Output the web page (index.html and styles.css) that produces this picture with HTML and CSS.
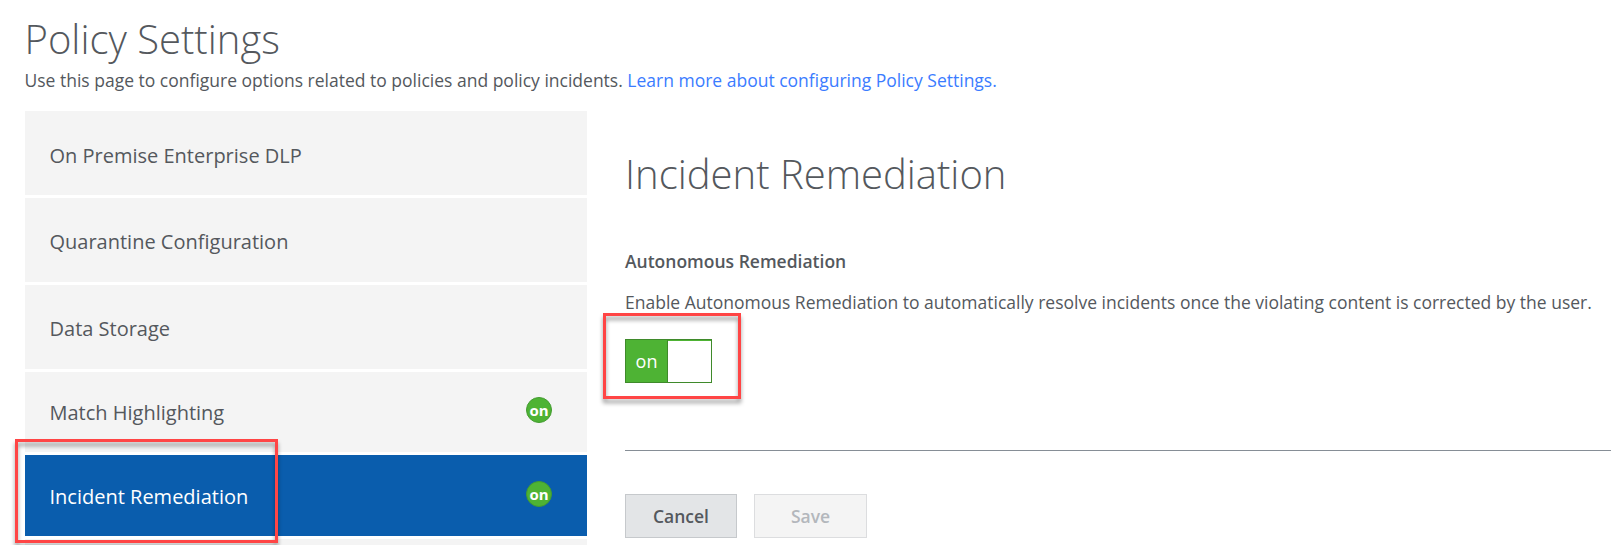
FILE: index.html
```html
<!DOCTYPE html>
<html lang="en">
<head>
<meta charset="utf-8">
<title>Policy Settings</title>
<link rel="stylesheet" href="styles.css">
</head>
<body>
<header class="page-head">
  <h1 class="title">Policy Settings</h1>
  <p class="intro">Use this page to configure options related to policies and policy incidents. <a class="link" href="#">Learn more about configuring Policy Settings.</a></p>
</header>
<main class="layout">
  <nav class="nav">
    <div class="nav-item tall first"><span>On Premise Enterprise DLP</span></div>
    <div class="nav-item tall"><span>Quarantine Configuration</span></div>
    <div class="nav-item tall"><span>Data Storage</span></div>
    <div class="nav-item"><span>Match Highlighting</span><span class="status">on</span></div>
    <div class="nav-item active"><span>Incident Remediation</span><span class="status">on</span></div>
    <div class="nav-item last"></div>
  </nav>
  <section class="panel">
    <h2 class="title panel-title">Incident Remediation</h2>
    <h3 class="label">Autonomous Remediation</h3>
    <p class="desc">Enable Autonomous Remediation to automatically resolve incidents once the violating content is corrected by the user.</p>
    <div class="toggle"><span class="toggle-on">on</span><span class="toggle-knob"></span></div>
    <div class="actions">
      <button class="btn">Cancel</button>
      <button class="btn save" disabled>Save</button>
    </div>
  </section>
</main>
<div class="callout callout-nav"></div>
<div class="callout callout-toggle"></div>
</body>
</html>
```
FILE: styles.css
```css
* { box-sizing: border-box; }
body {
  margin: 0;
  width: 1611px;
  height: 545px;
  overflow: hidden;
  position: relative;
  background: #fff;
  color: #54585d;
  font-family: "Open Sans", sans-serif;
}
h1, h2, h3, p { margin: 0; }
.page-head { height: 111px; padding: 12px 0 0 24.5px; }
.title { font-size: 40px; line-height: 54px; font-weight: 300; white-space: nowrap; }
.intro { font-size: 17.5px; line-height: 24px; margin-top: 2px; white-space: nowrap; }
.link { color: #3b7cff; text-decoration: none; }
.layout { display: flex; padding-left: 25px; }
.nav { flex: none; width: 562px; display: flex; flex-direction: column; gap: 3px; }
.nav-item {
  height: 80px;
  padding: 2px 35px 0 24.5px;
  display: flex;
  align-items: center;
  justify-content: space-between;
  background: #f4f4f4;
  font-size: 20px;
  line-height: 28px;
}
.nav-item.tall { height: 84px; padding-top: 3px; }
.nav-item.first { padding-top: 5px; }
.nav-item.active { height: 81px; background: #0a5dad; color: #fff; }
.nav-item.last { height: 6px; padding: 0; }
.status {
  width: 26px;
  height: 26px;
  margin-bottom: 6px;
  border-radius: 50%;
  background: #4eb334;
  border: 1px solid #439c30;
  color: #fff;
  font-size: 15px;
  font-weight: 700;
  line-height: 25px;
  text-align: center;
}
.panel { flex: 1; min-width: 0; padding: 36px 0 0 38px; }
.panel-title { height: 54px; }
.label { font-size: 17.5px; line-height: 24px; font-weight: 600; margin-top: 48px; }
.desc { font-size: 17.5px; line-height: 24px; margin-top: 17px; white-space: nowrap; }
.toggle {
  display: flex;
  width: 87px;
  height: 44px;
  margin-top: 25px;
  border: 1px solid #3f8a2b;
  background: #4eb334;
}
.toggle-on {
  width: 42px;
  border-right: 1px solid #3f8a2b;
  color: #fff;
  font-size: 18px;
  line-height: 42px;
  text-align: center;
}
.toggle-knob { flex: 1; margin-top: 1px; background: #fff; }
.actions {
  display: flex;
  gap: 17px;
  margin-top: 67px;
  padding-top: 43px;
  border-top: 1px solid #868e96;
}
.btn {
  width: 112px;
  height: 44px;
  padding: 0;
  border: 1px solid #c6c9cc;
  background: #e3e5e7;
  color: #54585d;
  font: 600 17.5px/42px "Open Sans", sans-serif;
}
.save { width: 113px; border-color: #dcdddf; background: #f4f4f4; color: #b3b7bc; }
.callout {
  position: absolute;
  border: 3px solid #ff4545;
  filter: drop-shadow(0 4px 2px rgba(0, 0, 0, .4));
}
.callout-nav { left: 15px; top: 439px; width: 263px; height: 104px; }
.callout-toggle { left: 603px; top: 313px; width: 138px; height: 86px; }
```
